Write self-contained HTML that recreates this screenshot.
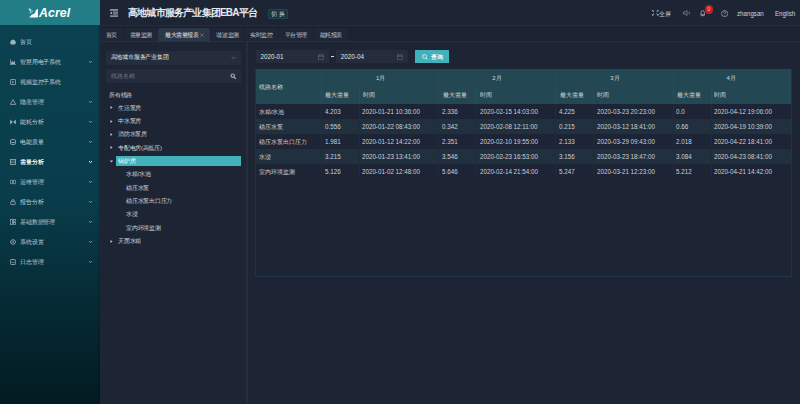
<!DOCTYPE html>
<html><head><meta charset="utf-8">
<style>
*{margin:0;padding:0;box-sizing:border-box}
html,body{width:800px;height:404px;overflow:hidden;background:#1d2535;font-family:"Liberation Sans",sans-serif;color:#c9cdd3}
.abs{position:absolute}
#logo{left:0;top:0;width:100px;height:24.6px;background:#227d87}
#side{left:0;top:24.6px;width:100px;height:379.4px;background:linear-gradient(180deg,#0b4150 0%,#093d4b 45%,#021a21 100%)}
#header{left:100px;top:0;width:700px;height:25.7px;background:#1d2535;border-bottom:1.5px solid #2b2641}
#tabs{left:100px;top:25.7px;width:700px;height:16.7px;background:#1b2232;border-bottom:1.5px solid #263243}
.tab{position:absolute;top:2.4px;height:13.3px;background:#1f2737;border-radius:3px 3px 0 0;font-size:6px;letter-spacing:-0.42px;line-height:14px;color:#c3c7cf;text-align:center}
.tab.act{background:#2b3747;color:#e6e9ee}
.mi{position:absolute;left:10px;font-size:6px;letter-spacing:-0.14px;color:#c6cdd1;line-height:8px;white-space:nowrap}
.mi .ic{position:absolute;left:0;top:1px;width:6px;height:6px}
.mi span{position:absolute;left:10px;top:0}
.mi .chev{position:absolute;left:78px;top:0}
.tr{position:absolute;font-size:6px;line-height:8px;color:#d3d7dc;white-space:nowrap}
.num{position:absolute;font-size:7px;line-height:8px;color:#cdd1d7;white-space:nowrap;transform:scaleX(0.89);transform-origin:0 50%}
.tri{position:absolute;width:0;height:0;border-left:2px solid #c9cdd3;border-top:1.5px solid transparent;border-bottom:1.5px solid transparent}
table{border-collapse:collapse;table-layout:fixed}
td,th{font-weight:normal;font-size:6.2px;white-space:nowrap;text-align:left;padding:0 0 0 4px;overflow:hidden}
</style></head><body>
<div id="logo" class="abs">
  <svg class="abs" style="left:28px;top:8px" width="10" height="10" viewBox="0 0 10 10"><path d="M1.2 9.5 L9.9 9.5 L9.9 0.8 L7.6 2.6 Q7.6 6.2 4 6.4 Z" fill="#fff"/><circle cx="1.7" cy="1.6" r="1.0" fill="#e8f4f5"/><circle cx="3.4" cy="3.3" r="1.0" fill="none" stroke="#d8ecee" stroke-width="0.7"/><circle cx="2.2" cy="4.8" r="0.6" fill="#cfe6e8"/></svg>
  <div class="abs" style="left:39px;top:7.1px;font-size:12.3px;font-weight:bold;font-style:italic;color:#fff;line-height:13px;letter-spacing:0.1px">Acrel</div>
</div>
<div id="side" class="abs">
<div class="abs" style="left:98px;top:0;width:2px;height:100%;background:rgba(0,0,0,0.12)"></div>
<div class="mi" style="top:13px;"><svg class="ic" viewBox="0 0 6 6"><path d="M3 0.4 Q5.6 0.8 5.8 3.2 L5.2 5.6 H0.8 L0.2 3.2 Q0.4 0.8 3 0.4Z" fill="#9fb2b7"/></svg><span>首页</span></div>
<div class="mi" style="top:33px;"><svg class="ic" viewBox="0 0 6 6"><path d="M0.3 0.3 V5.7 H5.9" fill="none" stroke="#9fb2b7" stroke-width="0.8"/><path d="M1.2 4.9 V3 L2.4 2.2 L3.6 3.4 L5 1.6 V4.9Z" fill="#9fb2b7"/></svg><span>智慧用电子系统</span><svg class="chev" style="top:2px" width="5" height="4" viewBox="0 0 5 4"><path d="M1 1.1 L2.5 2.6 L4 1.1" fill="none" stroke="#a3b3b8" stroke-width="0.8"/></svg></div>
<div class="mi" style="top:53px;"><svg class="ic" viewBox="0 0 6 6"><rect x="0.5" y="0.5" width="5" height="5" rx="0.6" fill="none" stroke="#9fb2b7" stroke-width="0.8"/><path d="M2.2 1.8 L4.1 3 L2.2 4.2Z" fill="#9fb2b7"/></svg><span>视频监控子系统</span></div>
<div class="mi" style="top:73px;"><svg class="ic" viewBox="0 0 6 6"><path d="M3 0.6 L5.7 5.4 H0.3Z" fill="none" stroke="#9fb2b7" stroke-width="0.8" stroke-linejoin="round"/></svg><span>隐患管理</span><svg class="chev" style="top:2px" width="5" height="4" viewBox="0 0 5 4"><path d="M1 1.1 L2.5 2.6 L4 1.1" fill="none" stroke="#a3b3b8" stroke-width="0.8"/></svg></div>
<div class="mi" style="top:93px;"><svg class="ic" viewBox="0 0 6 6"><path d="M0.2 0.6 L2.8 3 L0.2 5.4Z M5.8 0.6 L3.2 3 L5.8 5.4Z" fill="#9fb2b7"/></svg><span>能耗分析</span><svg class="chev" style="top:2px" width="5" height="4" viewBox="0 0 5 4"><path d="M1 1.1 L2.5 2.6 L4 1.1" fill="none" stroke="#a3b3b8" stroke-width="0.8"/></svg></div>
<div class="mi" style="top:113px;"><svg class="ic" viewBox="0 0 6 6"><rect x="0.6" y="0.6" width="4.8" height="4.8" rx="1" fill="none" stroke="#9fb2b7" stroke-width="0.9"/><path d="M0.8 3 Q3 4.8 5.2 3 Z" fill="#9fb2b7"/></svg><span>电能质量</span><svg class="chev" style="top:2px" width="5" height="4" viewBox="0 0 5 4"><path d="M1 1.1 L2.5 2.6 L4 1.1" fill="none" stroke="#a3b3b8" stroke-width="0.8"/></svg></div>
<div class="mi" style="top:133px;color:#ffffff;text-shadow:0 0 0.2px #fff"><svg class="ic" viewBox="0 0 6 6"><rect x="0.5" y="0.5" width="5" height="5" fill="none" stroke="#9fb2b7" stroke-width="0.8"/><path d="M0.5 2.2 H5.5 M0.5 3.8 H5.5" stroke="#9fb2b7" stroke-width="0.6"/></svg><span>需量分析</span><svg class="chev" style="top:2px" width="5" height="4" viewBox="0 0 5 4"><path d="M1 1.2 L2.5 2.6 L4 1.2" fill="none" stroke="#ffffff" stroke-width="1"/></svg></div>
<div class="mi" style="top:153px;"><svg class="ic" viewBox="0 0 6 6"><rect x="0.4" y="1.2" width="2.4" height="3.6" rx="1" fill="none" stroke="#9fb2b7" stroke-width="0.8"/><rect x="3.2" y="1.2" width="2.4" height="3.6" rx="1" fill="none" stroke="#9fb2b7" stroke-width="0.8"/></svg><span>运维管理</span><svg class="chev" style="top:2px" width="5" height="4" viewBox="0 0 5 4"><path d="M1 1.1 L2.5 2.6 L4 1.1" fill="none" stroke="#a3b3b8" stroke-width="0.8"/></svg></div>
<div class="mi" style="top:173px;"><svg class="ic" viewBox="0 0 6 6"><path d="M1.6 2.6 V2 Q1.6 0.6 3 0.6 Q4.4 0.6 4.4 2 V2.6" fill="none" stroke="#9fb2b7" stroke-width="0.8"/><rect x="0.7" y="2.7" width="4.6" height="2.8" rx="0.6" fill="none" stroke="#9fb2b7" stroke-width="0.8"/></svg><span>报告分析</span><svg class="chev" style="top:2px" width="5" height="4" viewBox="0 0 5 4"><path d="M1 1.1 L2.5 2.6 L4 1.1" fill="none" stroke="#a3b3b8" stroke-width="0.8"/></svg></div>
<div class="mi" style="top:193px;"><svg class="ic" viewBox="0 0 6 6"><rect x="0.5" y="0.6" width="2.1" height="4.8" fill="none" stroke="#9fb2b7" stroke-width="0.7"/><rect x="3.4" y="0.6" width="2.1" height="2" fill="none" stroke="#9fb2b7" stroke-width="0.7"/><rect x="3.4" y="3.4" width="2.1" height="2" fill="none" stroke="#9fb2b7" stroke-width="0.7"/></svg><span>基础数据管理</span><svg class="chev" style="top:2px" width="5" height="4" viewBox="0 0 5 4"><path d="M1 1.1 L2.5 2.6 L4 1.1" fill="none" stroke="#a3b3b8" stroke-width="0.8"/></svg></div>
<div class="mi" style="top:213px;"><svg class="ic" viewBox="0 0 6 6"><path d="M3 0.5 L5.3 1.8 V4.2 L3 5.5 L0.7 4.2 V1.8Z" fill="none" stroke="#9fb2b7" stroke-width="0.8"/><circle cx="3" cy="3" r="0.9" fill="none" stroke="#9fb2b7" stroke-width="0.6"/></svg><span>系统设置</span><svg class="chev" style="top:2px" width="5" height="4" viewBox="0 0 5 4"><path d="M1 1.1 L2.5 2.6 L4 1.1" fill="none" stroke="#a3b3b8" stroke-width="0.8"/></svg></div>
<div class="mi" style="top:233px;"><svg class="ic" viewBox="0 0 6 6"><rect x="0.7" y="0.5" width="4.6" height="5" rx="0.4" fill="none" stroke="#9fb2b7" stroke-width="0.8"/><path d="M1.8 3.4 H4.2" stroke="#9fb2b7" stroke-width="0.7"/></svg><span>日志管理</span><svg class="chev" style="top:2px" width="5" height="4" viewBox="0 0 5 4"><path d="M1 1.1 L2.5 2.6 L4 1.1" fill="none" stroke="#a3b3b8" stroke-width="0.8"/></svg></div>
</div>
<div id="header" class="abs">
  <svg class="abs" style="left:9.8px;top:8.7px" width="8.4" height="8.2" viewBox="0 0 8.4 8.2"><rect x="0" y="0" width="8.4" height="1.9" fill="#858b94"/><rect x="3" y="2.5" width="5.4" height="1.4" fill="#7f858e"/><rect x="3" y="4.3" width="5.4" height="1.4" fill="#858b94"/><rect x="0" y="6.3" width="8.4" height="1.9" fill="#858b94"/><ellipse cx="1.3" cy="4.1" rx="0.9" ry="1.1" fill="#aeb3ba"/></svg>
  <div class="abs" style="left:28px;top:6.3px;font-size:10px;letter-spacing:-0.8px;font-weight:bold;color:#e6e9ed;line-height:13px;white-space:nowrap">高地城市服务产业集团EBA平台</div>
  <div class="abs" style="left:167.7px;top:8.6px;width:20.5px;height:10.2px;border:1px solid #1c454f;background:#1b3240;border-radius:1px;font-size:6px;letter-spacing:1.6px;text-indent:1.6px;line-height:8.4px;text-align:center;color:#cdd5dc">切换</div>

  <svg class="abs" style="left:552px;top:10px" width="6.5" height="5.5" viewBox="0 0 6.5 5.5"><path d="M0.3 0.3 L2 1.8 M0.3 0.3 H1.5 M0.3 0.3 V1.5 M6.2 0.3 L4.5 1.8 M6.2 0.3 H5 M6.2 0.3 V1.5 M0.3 5.2 L2 3.7 M0.3 5.2 H1.5 M0.3 5.2 V4 M6.2 5.2 L4.5 3.7 M6.2 5.2 H5 M6.2 5.2 V4" stroke="#c3c8cf" stroke-width="0.7" fill="none"/></svg>
  <div class="abs" style="left:559px;top:10px;font-size:6px;letter-spacing:-0.2px;line-height:8px;color:#d0d4da;white-space:nowrap">全屏</div>
  <svg class="abs" style="left:583px;top:10px" width="8" height="6" viewBox="0 0 8 6"><path d="M0.5 2 H2 L4 0.5 V5.5 L2 4 H0.5Z" fill="none" stroke="#9ea5af" stroke-width="0.6"/><path d="M7 1.8 L5.5 3 L7 4.2" fill="none" stroke="#9ea5af" stroke-width="0.6"/></svg>
  <svg class="abs" style="left:600px;top:10px" width="6" height="7" viewBox="0 0 6 7"><path d="M1 5 V2.8 Q1 0.6 2.7 0.6 Q4.4 0.6 4.4 2.8 V5 Z M0.5 5 H4.9" fill="none" stroke="#b3b9c2" stroke-width="0.7"/><path d="M2.2 5.9 H3.2" stroke="#b3b9c2" stroke-width="0.6"/></svg>
  <div class="abs" style="left:604.5px;top:5px;width:8.6px;height:8.6px;border-radius:50%;background:#c71f26;font-size:5px;line-height:8.6px;text-align:center;color:#f3d0d2">0</div>
  <svg class="abs" style="left:620.5px;top:10.3px" width="7.2" height="7.2" viewBox="0 0 7.2 7.2"><circle cx="3.6" cy="3.6" r="3.1" fill="none" stroke="#a7adb6" stroke-width="0.7"/><path d="M2.6 2.8 Q2.6 1.8 3.6 1.8 Q4.6 1.8 4.6 2.7 Q4.6 3.4 3.6 3.8 V4.3" fill="none" stroke="#a7adb6" stroke-width="0.6"/><circle cx="3.6" cy="5.3" r="0.35" fill="#a7adb6"/></svg>
  <div class="abs" style="left:637px;top:9.5px;font-size:7.2px;line-height:8px;color:#d0d4da;white-space:nowrap;transform:scaleX(0.86);transform-origin:0 50%">zhangsan</div>
  <div class="abs" style="left:675px;top:9.5px;font-size:7.2px;line-height:8px;color:#d0d4da;white-space:nowrap;transform:scaleX(0.86);transform-origin:0 50%">English</div>
</div>
<div id="tabs" class="abs">
<div class="tab" style="left:0px;width:23.0px">首页</div>
<div class="tab" style="left:24px;width:33.7px">需量监测</div>
<div class="tab act" style="left:58.3px;width:51.7px"><span style="position:absolute;left:6.7px;top:0">最大需量报表</span><svg class="abs" style="left:42px;top:4.8px" width="4" height="4" viewBox="0 0 4 4"><path d="M0.3 0.3 L3.7 3.7 M3.7 0.3 L0.3 3.7" stroke="#8d96a3" stroke-width="0.5"/></svg></div>
<div class="tab" style="left:111.2px;width:32.8px">谐波监测</div>
<div class="tab" style="left:145px;width:33.0px">实时监控</div>
<div class="tab" style="left:179px;width:33.6px">平台管理</div>
<div class="tab" style="left:213.5px;width:34.5px">能耗报表</div>
</div>
<div id="content">
<div class="abs" style="left:106px;top:51px;width:135px;height:13.5px;background:#252d3d;border-radius:1px"><div class="abs" style="left:4.5px;top:2.2px;font-size:6px;letter-spacing:-0.2px;line-height:8px;color:#e6e9ee;white-space:nowrap">高地城市服务产业集团</div><svg class="abs" style="left:125px;top:5px" width="5" height="4" viewBox="0 0 5 4"><path d="M0.6 0.9 L2.5 2.8 L4.4 0.9" fill="none" stroke="#6a727f" stroke-width="0.8"/></svg></div>
<div class="abs" style="left:106px;top:69px;width:135px;height:13.5px;background:#252d3d;border-radius:1px"><div class="abs" style="left:4.5px;top:3px;font-size:5.8px;line-height:8px;color:#6e7787;white-space:nowrap">线路名称</div><svg class="abs" style="left:124px;top:3.5px" width="7" height="7" viewBox="0 0 7 7"><circle cx="2.7" cy="2.7" r="1.7" fill="none" stroke="#a3aab4" stroke-width="1.1"/><path d="M4 4 L5.9 5.9" stroke="#a3aab4" stroke-width="1.2"/></svg></div>
<div class="tr" style="left:109px;letter-spacing:-0.25px;top:91.2px">所有线路</div>
<div class="tr" style="left:118px;letter-spacing:-0.25px;top:103.7px">生活泵房</div>
<svg class="abs" style="left:110px;top:106.2px" width="3" height="3" viewBox="0 0 3 3"><path d="M0.5 0 V3 L2.5 1.5Z" fill="#c9cdd3"/></svg>
<div class="tr" style="left:118px;letter-spacing:-0.25px;top:117.1px">中水泵房</div>
<svg class="abs" style="left:110px;top:119.6px" width="3" height="3" viewBox="0 0 3 3"><path d="M0.5 0 V3 L2.5 1.5Z" fill="#c9cdd3"/></svg>
<div class="tr" style="left:118px;letter-spacing:-0.25px;top:130.4px">消防水泵房</div>
<svg class="abs" style="left:110px;top:132.9px" width="3" height="3" viewBox="0 0 3 3"><path d="M0.5 0 V3 L2.5 1.5Z" fill="#c9cdd3"/></svg>
<div class="tr" style="left:118px;letter-spacing:-0.25px;top:143.7px">专配电房(高低压)</div>
<svg class="abs" style="left:110px;top:146.2px" width="3" height="3" viewBox="0 0 3 3"><path d="M0.5 0 V3 L2.5 1.5Z" fill="#c9cdd3"/></svg>
<div class="abs" style="left:116px;top:156px;width:125px;height:10px;background:#42b1ba"></div>
<div class="tr" style="left:118px;letter-spacing:-0.25px;top:157.1px;color:#fff">锅炉房</div>
<svg class="abs" style="left:110px;top:159.6px" width="3" height="3" viewBox="0 0 3 3"><path d="M0 0.5 H3 L1.5 2.5Z" fill="#c9cdd3"/></svg>
<div class="tr" style="left:126px;letter-spacing:-0.25px;top:170.4px">水箱/水池</div>
<div class="tr" style="left:126px;letter-spacing:-0.25px;top:183.7px">稳压水泵</div>
<div class="tr" style="left:126px;letter-spacing:-0.25px;top:197.0px">稳压水泵出口压力</div>
<div class="tr" style="left:126px;letter-spacing:-0.25px;top:210.4px">水浸</div>
<div class="tr" style="left:126px;letter-spacing:-0.25px;top:223.7px">室内环境监测</div>
<div class="tr" style="left:118px;letter-spacing:-0.25px;top:237.0px">天面水箱</div>
<svg class="abs" style="left:110px;top:239.5px" width="3" height="3" viewBox="0 0 3 3"><path d="M0.5 0 V3 L2.5 1.5Z" fill="#c9cdd3"/></svg>
<div class="abs" style="left:246.3px;top:42.4px;width:1.4px;height:362px;background:#242d3c"></div>
<div class="abs" style="left:255.5px;top:50.3px;width:73px;height:12.5px;background:#252d3d;border-radius:1px"><div class="abs" style="left:5px;top:2.5px;font-size:6.3px;line-height:8px;color:#dfe3e8">2020-01</div><svg class="abs" style="left:62px;top:4px" width="6" height="6" viewBox="0 0 6 6"><rect x="0.5" y="1" width="5" height="4.5" fill="none" stroke="#6b7482" stroke-width="0.5"/><path d="M0.5 2.3 H5.5 M1.8 0.3 V1.5 M4.2 0.3 V1.5" stroke="#6b7482" stroke-width="0.5"/></svg></div>
<div class="abs" style="left:330.8px;top:55.7px;width:3px;height:1.2px;background:#d5d9de"></div>
<div class="abs" style="left:336.3px;top:50.3px;width:72.2px;height:12.5px;background:#252d3d;border-radius:1px"><div class="abs" style="left:4.5px;top:2.5px;font-size:6.3px;line-height:8px;color:#dfe3e8">2020-04</div><svg class="abs" style="left:61px;top:4px" width="6" height="6" viewBox="0 0 6 6"><rect x="0.5" y="1" width="5" height="4.5" fill="none" stroke="#6b7482" stroke-width="0.5"/><path d="M0.5 2.3 H5.5 M1.8 0.3 V1.5 M4.2 0.3 V1.5" stroke="#6b7482" stroke-width="0.5"/></svg></div>
<div class="abs" style="left:415px;top:50.2px;width:34.2px;height:13.2px;background:#41b2bb;border-radius:0.5px"><svg class="abs" style="left:6.6px;top:3.8px" width="6" height="6" viewBox="0 0 6 6"><circle cx="2.5" cy="2.5" r="1.9" fill="none" stroke="#f2fafa" stroke-width="0.75"/><path d="M3.9 3.9 L5.5 5.4" stroke="#f2fafa" stroke-width="0.9"/></svg><div class="abs" style="left:15.5px;top:2.5px;font-size:6px;line-height:8px;color:#fff;letter-spacing:0.3px;text-shadow:0 0 0.3px #fff">查询</div></div>
<div class="abs" style="left:255px;top:68.5px;width:537px;height:208.5px;border:1px solid #1b364a"></div>
<div class="abs" style="left:255.5px;top:69px;width:535.5px;height:35px;background:#234853"></div>
<div class="tr" style="left:259.3px;top:82.6px;color:#d4dade">线路名称</div>
<div class="tr" style="left:322px;width:117.3px;text-align:center;top:73.8px;color:#d4dade">1月</div>
<div class="tr" style="left:325.2px;top:91.3px;color:#d4dade">最大需量</div>
<div class="tr" style="left:362.8px;top:91.3px;color:#d4dade">时间</div>
<div class="tr" style="left:438.3px;width:117.1px;text-align:center;top:73.8px;color:#d4dade">2月</div>
<div class="tr" style="left:442.5px;top:91.3px;color:#d4dade">最大需量</div>
<div class="tr" style="left:480.1px;top:91.3px;color:#d4dade">时间</div>
<div class="tr" style="left:556.4px;width:117.1px;text-align:center;top:73.8px;color:#d4dade">3月</div>
<div class="tr" style="left:559.6px;top:91.3px;color:#d4dade">最大需量</div>
<div class="tr" style="left:597.2px;top:91.3px;color:#d4dade">时间</div>
<div class="tr" style="left:671.8px;width:118.5px;text-align:center;top:73.8px;color:#d4dade">4月</div>
<div class="tr" style="left:676.7px;top:91.3px;color:#d4dade">最大需量</div>
<div class="tr" style="left:714.3px;top:91.3px;color:#d4dade">时间</div>
<div class="abs" style="left:321.0px;top:69px;width:1px;height:35px;background:#274d56"></div>
<div class="abs" style="left:359.0px;top:86px;width:1px;height:18px;background:#274d56"></div>
<div class="abs" style="left:438.3px;top:69px;width:1px;height:35px;background:#274d56"></div>
<div class="abs" style="left:476.3px;top:86px;width:1px;height:18px;background:#274d56"></div>
<div class="abs" style="left:555.4px;top:69px;width:1px;height:35px;background:#274d56"></div>
<div class="abs" style="left:593.4px;top:86px;width:1px;height:18px;background:#274d56"></div>
<div class="abs" style="left:672.5px;top:69px;width:1px;height:35px;background:#274d56"></div>
<div class="abs" style="left:710.5px;top:86px;width:1px;height:18px;background:#274d56"></div>
<div class="abs" style="left:255.5px;top:104px;width:535.5px;height:15px;background:#1c2435"></div>
<div class="tr" style="left:258.8px;top:107.5px">水箱/水池</div>
<div class="num" style="left:324.7px;top:107.5px">4.203</div>
<div class="num" style="left:362.3px;top:107.5px">2020-01-21 10:36:00</div>
<div class="num" style="left:442.0px;top:107.5px">2.336</div>
<div class="num" style="left:479.6px;top:107.5px">2020-02-15 14:03:00</div>
<div class="num" style="left:559.1px;top:107.5px">4.225</div>
<div class="num" style="left:596.7px;top:107.5px">2020-03-23 20:23:00</div>
<div class="num" style="left:676.2px;top:107.5px">0.0</div>
<div class="num" style="left:713.8px;top:107.5px">2020-04-12 19:06:00</div>
<div class="abs" style="left:255.5px;top:119px;width:535.5px;height:15px;background:#21303e"></div>
<div class="tr" style="left:258.8px;top:122.5px">稳压水泵</div>
<div class="num" style="left:324.7px;top:122.5px">0.556</div>
<div class="num" style="left:362.3px;top:122.5px">2020-01-22 08:43:00</div>
<div class="num" style="left:442.0px;top:122.5px">0.342</div>
<div class="num" style="left:479.6px;top:122.5px">2020-02-08 12:11:00</div>
<div class="num" style="left:559.1px;top:122.5px">0.215</div>
<div class="num" style="left:596.7px;top:122.5px">2020-03-12 18:41:00</div>
<div class="num" style="left:676.2px;top:122.5px">0.66</div>
<div class="num" style="left:713.8px;top:122.5px">2020-04-19 10:39:00</div>
<div class="abs" style="left:255.5px;top:134px;width:535.5px;height:15px;background:#1c2435"></div>
<div class="tr" style="left:258.8px;top:137.5px">稳压水泵出口压力</div>
<div class="num" style="left:324.7px;top:137.5px">1.981</div>
<div class="num" style="left:362.3px;top:137.5px">2020-01-12 14:22:00</div>
<div class="num" style="left:442.0px;top:137.5px">2.351</div>
<div class="num" style="left:479.6px;top:137.5px">2020-02-10 19:55:00</div>
<div class="num" style="left:559.1px;top:137.5px">2.133</div>
<div class="num" style="left:596.7px;top:137.5px">2020-03-29 09:43:00</div>
<div class="num" style="left:676.2px;top:137.5px">2.018</div>
<div class="num" style="left:713.8px;top:137.5px">2020-04-22 18:41:00</div>
<div class="abs" style="left:255.5px;top:149px;width:535.5px;height:15px;background:#21303e"></div>
<div class="tr" style="left:258.8px;top:152.5px">水浸</div>
<div class="num" style="left:324.7px;top:152.5px">3.215</div>
<div class="num" style="left:362.3px;top:152.5px">2020-01-23 13:41:00</div>
<div class="num" style="left:442.0px;top:152.5px">3.546</div>
<div class="num" style="left:479.6px;top:152.5px">2020-02-23 16:53:00</div>
<div class="num" style="left:559.1px;top:152.5px">3.156</div>
<div class="num" style="left:596.7px;top:152.5px">2020-03-23 18:47:00</div>
<div class="num" style="left:676.2px;top:152.5px">3.084</div>
<div class="num" style="left:713.8px;top:152.5px">2020-04-23 08:41:00</div>
<div class="abs" style="left:255.5px;top:164px;width:535.5px;height:15px;background:#1c2435"></div>
<div class="tr" style="left:258.8px;top:167.5px">室内环境监测</div>
<div class="num" style="left:324.7px;top:167.5px">5.126</div>
<div class="num" style="left:362.3px;top:167.5px">2020-01-02 12:48:00</div>
<div class="num" style="left:442.0px;top:167.5px">5.646</div>
<div class="num" style="left:479.6px;top:167.5px">2020-02-14 21:54:00</div>
<div class="num" style="left:559.1px;top:167.5px">5.247</div>
<div class="num" style="left:596.7px;top:167.5px">2020-03-21 12:23:00</div>
<div class="num" style="left:676.2px;top:167.5px">5.212</div>
<div class="num" style="left:713.8px;top:167.5px">2020-04-21 14:42:00</div>
<div class="abs" style="left:321.0px;top:104px;width:1px;height:75px;background:#202c3b"></div>
<div class="abs" style="left:359.0px;top:104px;width:1px;height:75px;background:#202c3b"></div>
<div class="abs" style="left:438.3px;top:104px;width:1px;height:75px;background:#202c3b"></div>
<div class="abs" style="left:476.3px;top:104px;width:1px;height:75px;background:#202c3b"></div>
<div class="abs" style="left:555.4px;top:104px;width:1px;height:75px;background:#202c3b"></div>
<div class="abs" style="left:593.4px;top:104px;width:1px;height:75px;background:#202c3b"></div>
<div class="abs" style="left:672.5px;top:104px;width:1px;height:75px;background:#202c3b"></div>
<div class="abs" style="left:710.5px;top:104px;width:1px;height:75px;background:#202c3b"></div>
</div>
</body></html>
